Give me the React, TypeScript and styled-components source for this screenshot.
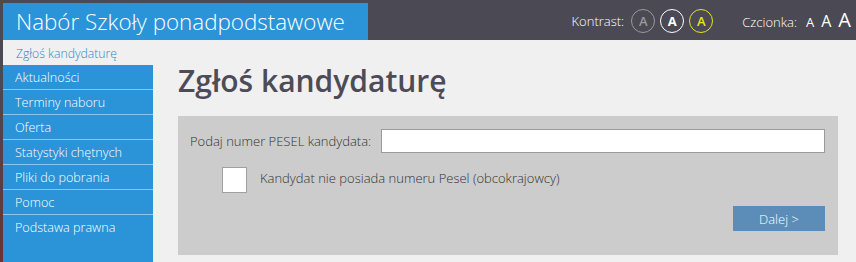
import React from "react";
import styled, { createGlobalStyle } from "styled-components";

const GlobalStyle = createGlobalStyle`
  html, body { margin: 0; padding: 0; }
  body {
    font-family: "Open Sans", "Liberation Sans", sans-serif;
    background: #4b4953;
    width: 856px;
    height: 262px;
    overflow: hidden;
  }
`;

const Page = styled.div`
  width: 856px;
  height: 262px;
  display: flex;
  flex-direction: column;
  padding-left: 3px;
  box-sizing: border-box;
  background: linear-gradient(to bottom, #4b4953 0%, #4b4953 30%, #6a3434 100%);
`;

const Header = styled.header`
  height: 40px;
  display: flex;
  align-items: stretch;
  background: #4b4953;
  margin-left: -3px;
  padding-left: 3px;
`;

const TitleBox = styled.div`
  width: 365px;
  margin-top: 3px;
  background: #2b93d8;
  color: #fff;
  font-size: 22.4px;
  font-weight: 300;
  line-height: 37px;
  padding-left: 13px;
  box-sizing: border-box;
  white-space: nowrap;
`;

const Tools = styled.div`
  flex: 1;
  display: flex;
  align-items: center;
  justify-content: flex-end;
  padding-right: 5px;
  padding-top: 1px;
  color: #fff;
  font-size: 13px;
  font-weight: 300;
`;

const ToolLabel = styled.span`
  margin-right: 2px;
`;

const ContrastCircle = styled.span<{ $c: string; $bold?: boolean }>`
  width: 22px;
  height: 22px;
  border: 1px solid ${(p) => p.$c};
  border-radius: 50%;
  color: ${(p) => p.$c};
  display: inline-flex;
  align-items: center;
  justify-content: center;
  font-size: 13px;
  font-weight: ${(p) => (p.$bold ? 700 : 600)};
  margin-left: 5px;
`;

const ContrastGroup = styled.div`
  display: flex;
  align-items: center;
  margin-right: 29px;
`;

const FontA = styled.span<{ $size: number }>`
  font-size: ${(p) => p.$size}px;
  line-height: 20px;
  margin-left: 7px;
  font-weight: 400;
`;

const FontGroup = styled.div`
  display: flex;
  align-items: baseline;
`;

const Body = styled.div`
  flex: 1;
  display: flex;
  min-height: 0;
`;

const Sidebar = styled.nav`
  width: 150px;
  display: flex;
  flex-direction: column;
  background: #f0f0f0;
`;

const ActiveItem = styled.div`
  height: 25px;
  line-height: 25px;
  padding: 1px 0 0 13px;
  box-sizing: border-box;
  color: #2f86c8;
  font-size: 12.2px;
  font-weight: 300;
  background: #f0f0f0;
`;

const Menu = styled.ul`
  list-style: none;
  margin: 0;
  padding: 0;
  flex: 1;
  background: #2b93d8;
`;

const MenuItem = styled.li<{ $last?: boolean }>`
  height: 25px;
  line-height: 24px;
  padding: 1px 0 0 12px;
  color: #fff;
  font-size: 12.6px;
  font-weight: 300;
  box-sizing: border-box;
  border-bottom: 1px solid ${(p) => (p.$last ? "transparent" : "#8ec5ee")};
`;

const Content = styled.main`
  flex: 1;
  background: #f0f0f0;
  padding: 0 18px 0 25px;
`;

const Heading = styled.h1`
  margin: 21px 0 0;
  font-size: 30px;
  font-weight: 600;
  color: #4d4b57;
  line-height: 40px;
  height: 55px;
`;

const Panel = styled.div`
  background: #cccccc;
  padding: 13px 13px 24px 12px;
  display: flex;
  flex-direction: column;
`;

const PeselRow = styled.div`
  display: flex;
  align-items: center;
`;

const Label = styled.label`
  font-size: 13px;
  font-weight: 300;
  color: #333;
  width: 191px;
  white-space: nowrap;
`;

const TextInput = styled.input`
  flex: 1;
  height: 24px;
  box-sizing: border-box;
  border: 1px solid #9a9a9a;
  background: #fff;
  margin: 0;
  padding: 2px 4px;
  font-family: inherit;
`;

const CheckRow = styled.div`
  display: flex;
  align-items: flex-start;
  margin-top: 14px;
  padding-left: 32px;
`;

const CheckBox = styled.span`
  width: 25px;
  height: 26px;
  box-sizing: border-box;
  background: #fff;
  border: 1px solid #a0a0a0;
  margin-right: 13px;
`;

const CheckLabel = styled.span`
  font-size: 13px;
  font-weight: 300;
  color: #333;
  line-height: 22px;
`;

const ButtonRow = styled.div`
  display: flex;
  justify-content: flex-end;
  margin-top: 13px;
`;

const Button = styled.button`
  width: 92px;
  height: 25px;
  background: #5b8db8;
  color: #fff;
  border: 0;
  font-family: inherit;
  font-size: 13px;
  font-weight: 300;
  padding: 0;
`;

const menu = [
  "Aktualności",
  "Terminy naboru",
  "Oferta",
  "Statystyki chętnych",
  "Pliki do pobrania",
  "Pomoc",
  "Podstawa prawna",
];

export default function App() {
  return (
    <>
      <GlobalStyle />
      <Page>
        <Header>
          <TitleBox>Nabór Szkoły ponadpodstawowe</TitleBox>
          <Tools>
            <ContrastGroup>
              <ToolLabel>Kontrast:</ToolLabel>
              <ContrastCircle $c="#9a9a9a">A</ContrastCircle>
              <ContrastCircle $c="#ffffff" $bold>A</ContrastCircle>
              <ContrastCircle $c="#e6e61a">A</ContrastCircle>
            </ContrastGroup>
            <FontGroup>
              <ToolLabel>Czcionka:</ToolLabel>
              <FontA $size={13}>A</FontA>
              <FontA $size={16}>A</FontA>
              <FontA $size={20}>A</FontA>
            </FontGroup>
          </Tools>
        </Header>
        <Body>
          <Sidebar>
            <ActiveItem>Zgłoś kandydaturę</ActiveItem>
            <Menu>
              {menu.map((m, i) => (
                <MenuItem key={m} $last={i === menu.length - 1}>
                  {m}
                </MenuItem>
              ))}
            </Menu>
          </Sidebar>
          <Content>
            <Heading>Zgłoś kandydaturę</Heading>
            <Panel>
              <PeselRow>
                <Label>Podaj numer PESEL kandydata:</Label>
                <TextInput type="text" />
              </PeselRow>
              <CheckRow>
                <CheckBox />
                <CheckLabel>Kandydat nie posiada numeru Pesel (obcokrajowcy)</CheckLabel>
              </CheckRow>
              <ButtonRow>
                <Button>Dalej &gt;</Button>
              </ButtonRow>
            </Panel>
          </Content>
        </Body>
      </Page>
    </>
  );
}
